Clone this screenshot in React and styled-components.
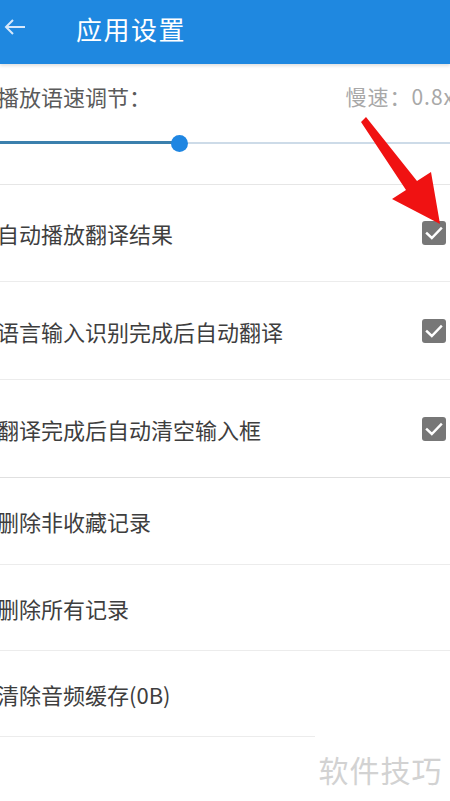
import React from "react";
import styled, { createGlobalStyle } from "styled-components";

const Global = createGlobalStyle`
  html, body { margin: 0; padding: 0; background: #ffffff; }
  body { font-family: "Noto Sans CJK SC", "Noto Sans", sans-serif; }
  * { box-sizing: border-box; }
`;

const Page = styled.div`
  position: relative;
  width: 450px;
  height: 801px;
  overflow: hidden;
  background: #ffffff;
`;

const Header = styled.header`
  height: 64px;
  background: #1f88e0;
  display: flex;
  align-items: center;
  padding-bottom: 8px;
  box-shadow: 0 2px 3px rgba(0, 0, 0, 0.12);
  position: relative;
  z-index: 1;
`;

const BackButton = styled.div`
  width: 76px;
  padding-left: 3px;
  display: flex;
  align-items: center;
  margin-top: -2px;
`;

const Title = styled.h1`
  margin: 0;
  color: #ffffff;
  font-size: 26px;
  font-weight: 400;
  letter-spacing: 1.5px;
`;

const SpeedSection = styled.section`
  height: 121px;
  display: flex;
  flex-direction: column;
  border-bottom: 1px solid #e6e6e6;
`;

const SpeedLabels = styled.div`
  display: flex;
  justify-content: space-between;
  align-items: center;
  height: 64px;
  white-space: nowrap;
`;

const SpeedLabel = styled.span`
  font-size: ${(p) => (p.$muted ? "21px" : "22px")};
  color: ${(p) => (p.$muted ? "#a8a8a8" : "#5a5a5a")};
  letter-spacing: ${(p) => (p.$muted ? "1px" : "0")};
  margin-left: ${(p) => (p.$muted ? "0" : "-3px")};
  margin-right: ${(p) => (p.$muted ? "-5px" : "0")};
`;

const Track = styled.div`
  position: relative;
  height: 3px;
  margin-top: 13px;
  display: flex;
  align-items: center;
`;

const Filled = styled.div`
  height: 3px;
  background: #3b80ad;
`;

const Rest = styled.div`
  flex: 1;
  height: 2px;
  background: #cddbe8;
`;

const Thumb = styled.div`
  position: absolute;
  top: 50%;
  width: 17px;
  height: 17px;
  margin: -8px 0 0 -8px;
  border-radius: 50%;
  background: #1f86e2;
`;

const Row = styled.div`
  height: ${(p) => p.$h}px;
  display: flex;
  align-items: center;
  justify-content: space-between;
  border-bottom: 1px solid ${(p) => (p.$strong ? "#e0e0e0" : "#ececec")};
  padding-right: 4px;
`;

const RowText = styled.span`
  font-size: 22px;
  color: #3e3e3e;
  margin-left: -3px;
  white-space: nowrap;
`;

const Check = styled.div`
  width: 24px;
  height: 24px;
  border-radius: 3px;
  background: #777777;
  display: flex;
  align-items: center;
  justify-content: center;
`;

const Watermark = styled.div`
  position: absolute;
  left: 315px;
  top: 736px;
  right: 0;
  bottom: 0;
  background: #ffffff;
  display: flex;
  align-items: center;
  justify-content: center;
  padding-right: 4px;
  font-size: 30px;
  color: #d2d2d2;
  letter-spacing: 1px;
`;

const ArrowLayer = styled.svg`
  position: absolute;
  left: 0;
  top: 0;
  pointer-events: none;
`;

const CheckIcon = () => (
  <svg width="18" height="14" viewBox="0 0 18 14">
    <path d="M2 7.5 L6.8 12 L16 2.5" fill="none" stroke="#fff" strokeWidth="2.4" strokeLinecap="square" />
  </svg>
);

const rows = [
  { text: "自动播放翻译结果", h: 97, check: true },
  { text: "语言输入识别完成后自动翻译", h: 98, check: true },
  { text: "翻译完成后自动清空输入框", h: 98, check: true, strong: true },
  { text: "删除非收藏记录", h: 87 },
  { text: "删除所有记录", h: 86 },
  { text: "清除音频缓存(0B)", h: 86 },
];

export default function App() {
  return (
    <Page>
      <Global />
      <Header>
        <BackButton>
          <svg width="24" height="18" viewBox="0 0 24 18">
            <path d="M22 9 H3 M10 2 L3 9 L10 16" fill="none" stroke="#d6e8fb" strokeWidth="2" />
          </svg>
        </BackButton>
        <Title>应用设置</Title>
      </Header>
      <SpeedSection>
        <SpeedLabels>
          <SpeedLabel>播放语速调节：</SpeedLabel>
          <SpeedLabel $muted>慢速：0.8x</SpeedLabel>
        </SpeedLabels>
        <Track>
          <Filled style={{ width: 179 }} />
          <Rest />
          <Thumb style={{ left: 179 }} />
        </Track>
      </SpeedSection>
      {rows.map((r) => (
        <Row key={r.text} $h={r.h} $strong={r.strong}>
          <RowText>{r.text}</RowText>
          {r.check && (
            <Check>
              <CheckIcon />
            </Check>
          )}
        </Row>
      ))}
      <Watermark>软件技巧</Watermark>
      <ArrowLayer width="450" height="801" viewBox="0 0 450 801">
        <polygon
          points="361,122 366,117 417,181 431,172 440,224 392,199 406,190"
          fill="#f01212"
        />
      </ArrowLayer>
    </Page>
  );
}
